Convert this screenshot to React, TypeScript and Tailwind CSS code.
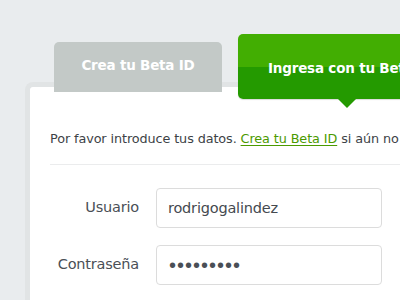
export default function App() {
  const font = { fontFamily: '"DejaVu Sans", "Liberation Sans", sans-serif' };

  return (
    <div className="w-[400px] h-[300px] overflow-hidden bg-[#e9ecee]" style={font}>
      {/* Tabs */}
      <div className="flex items-start pt-[34px] pl-[54px] gap-[16px]">
        <div className="mt-[8px] w-[168px] h-[50px] shrink-0 rounded-t-[5px] bg-[#c3c9c7] flex justify-center pt-[13px]">
          <span className="text-[13.5px] font-bold text-white tracking-[-0.2px]">Crea tu Beta ID</span>
        </div>
        <div className="relative z-10 w-[200px] h-[65px] shrink-0 rounded-[5px] shadow-[0_1px_1px_rgba(0,0,0,0.15)]">
          <div className="h-full rounded-[5px] overflow-hidden flex flex-col">
            <div className="h-[33px] bg-[#42ae02]" />
            <div className="flex-1 bg-[#249a00]" />
          </div>
          <span className="absolute left-[30px] top-[24px] whitespace-nowrap text-[13.5px] font-bold text-white tracking-[-0.2px]">
            Ingresa con tu Beta ID
          </span>
          <div className="absolute left-[100px] top-[65px] w-0 h-0 border-x-[9px] border-x-transparent border-t-[9px] border-t-[#249a00]" />
        </div>
      </div>

      {/* Card */}
      <div className="-mt-[17px] ml-[25px] w-[420px] border-[5px] border-[#e1e4e5] border-r-0 rounded-tl-[8px] bg-white">
        <div className="pt-[43px] pl-[20px]">
          <p className="text-[12.8px] leading-[18px] text-[#3d4246] whitespace-nowrap tracking-[-0.1px]">
            Por favor introduce tus datos.{' '}
            <a className="text-[#4b9a00] underline underline-offset-2 decoration-[#4b9a00]">Crea tu Beta ID</a> si aún no
            tienes uno.
          </p>
          <div className="mt-[16px] h-px bg-[#ebeced]" />
          <div className="mt-[23px] flex flex-col gap-[17px]">
            <div className="flex items-center gap-[17px]">
              <label className="w-[89px] text-right text-[14.5px] text-[#4a4f56] tracking-[-0.2px]">Usuario</label>
              <input
                readOnly
                defaultValue="rodrigogalindez"
                className="w-[226px] h-[40px] rounded-[4px] border border-[#dcdcdc] px-[11px] text-[14.5px] text-[#454a50] outline-none tracking-[-0.2px]"
                style={font}
              />
            </div>
            <div className="flex items-center gap-[17px]">
              <label className="w-[89px] text-right text-[14.5px] text-[#4a4f56] tracking-[-0.2px]">Contraseña</label>
              <input
                readOnly
                type="password"
                defaultValue="123456789"
                className="w-[226px] h-[40px] rounded-[4px] border border-[#dcdcdc] px-[12px] text-[20px] text-[#4a4f56] outline-none tracking-[1px] font-['Liberation_Sans',sans-serif]"
              />
            </div>
          </div>
        </div>
        <div className="h-[40px]" />
      </div>
    </div>
  );
}
